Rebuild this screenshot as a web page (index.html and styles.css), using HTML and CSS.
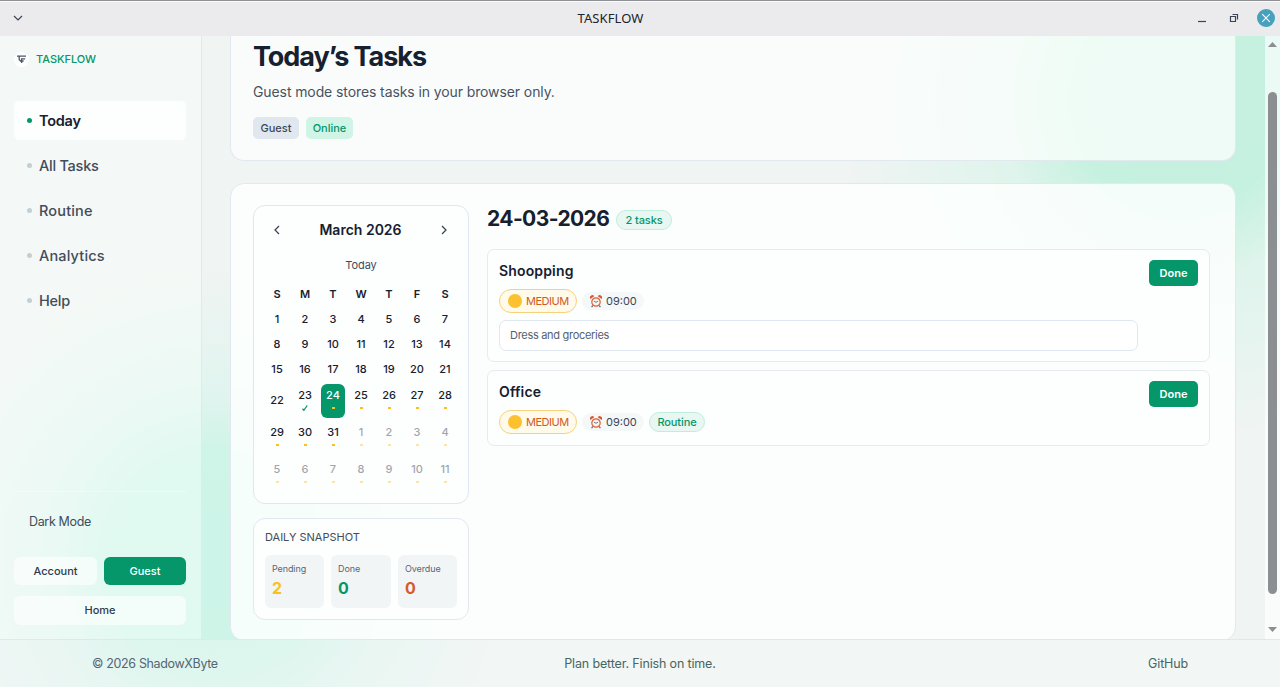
FILE: index.html
```html
<!DOCTYPE html>
<html lang="en">
<head>
    <meta charset="UTF-8">
    <meta name="viewport" content="width=device-width, initial-scale=1.0">
    <title>TASKFLOW</title>
    <link rel="stylesheet" href="styles.css">
</head>
<body>
    <header class="titlebar">
        <svg class="win-menu" width="12" height="8" viewBox="0 0 12 8"><path d="M2 2l4 4 4-4"/></svg>
        <span class="win-title">TASKFLOW</span>
        <div class="win-controls">
            <svg width="10" height="10" viewBox="0 0 10 10"><path d="M1 8.5h8"/></svg>
            <svg width="10" height="10" viewBox="0 0 10 10"><path d="M1.5 3.5h5v5h-5zM3.5 1.5h5v5"/></svg>
            <span class="win-close"><svg width="10" height="10" viewBox="0 0 10 10"><path d="M1.2 1.2l7.6 7.6M8.8 1.2L1.2 8.8"/></svg></span>
        </div>
    </header>

    <div class="app">
        <aside class="sidebar">
            <div class="brand">
                <svg class="logo" width="15" height="15" viewBox="0 0 15 15"><circle cx="7.5" cy="7.5" r="7.5" fill="#fff"/><path d="M3 4.2h9M5.2 4.5v3.3l2 1.6M7.6 11V6.8h3.6M7.6 9h2" fill="none" stroke="#4b5565" stroke-width="1.3"/></svg>
                <span>TASKFLOW</span>
            </div>
            <nav class="nav">
                <a class="nav-link active">Today</a>
                <a class="nav-link">All Tasks</a>
                <a class="nav-link routine-link">Routine</a>
                <a class="nav-link routine-link">Analytics</a>
                <a class="nav-link">Help</a>
            </nav>
            <div class="sidebar-bottom">
                <div class="dark-mode">Dark Mode</div>
                <div class="account-grid">
                    <button class="side-btn">Account</button>
                    <button class="side-btn primary">Guest</button>
                    <button class="side-btn wide">Home</button>
                </div>
            </div>
        </aside>

        <main class="main">
            <section class="hero">
                <h1>Today’s Tasks</h1>
                <p>Guest mode stores tasks in your browser only.</p>
                <div class="badges">
                    <span class="badge">Guest</span>
                    <span class="badge online">Online</span>
                </div>
            </section>

            <section class="workspace">
                <div class="left-col">
                    <div class="calendar">
                        <div class="cal-head">
                            <svg width="8" height="10" viewBox="0 0 8 10"><path d="M6 1L2 5l4 4"/></svg>
                            <strong>March 2026</strong>
                            <svg width="8" height="10" viewBox="0 0 8 10"><path d="M2 1l4 4-4 4"/></svg>
                        </div>
                        <div class="cal-today">Today</div>
                        <div class="cal-grid">
                            <b>S</b><b>M</b><b>T</b><b>W</b><b>T</b><b>F</b><b>S</b>
                            <span>1</span><span>2</span><span>3</span><span>4</span><span>5</span><span>6</span><span>7</span>
                            <span>8</span><span>9</span><span>10</span><span>11</span><span>12</span><span>13</span><span>14</span>
                            <span>15</span><span>16</span><span>17</span><span>18</span><span>19</span><span>20</span><span>21</span>
                            <span>22</span>
                            <span class="day">23<svg class="check" width="8" height="8" viewBox="0 0 8 8"><path d="M1.5 4.7l1.4 1.6L6.2 1.5"/></svg></span>
                            <span class="day selected">24<i></i></span>
                            <span class="day">25<i></i></span><span class="day">26<i></i></span><span class="day">27<i></i></span><span class="day">28<i></i></span>
                            <span class="day">29<i></i></span><span class="day">30<i></i></span><span class="day">31<i></i></span>
                            <span class="day other">1<i></i></span><span class="day other">2<i></i></span><span class="day other">3<i></i></span><span class="day other">4<i></i></span>
                            <span class="day other">5<i></i></span><span class="day other">6<i></i></span><span class="day other">7<i></i></span><span class="day other">8<i></i></span><span class="day other">9<i></i></span><span class="day other">10<i></i></span><span class="day other">11<i></i></span>
                        </div>
                    </div>

                    <div class="snapshot">
                        <div class="snapshot-title">DAILY SNAPSHOT</div>
                        <div class="stats">
                            <div class="stat pending"><span>Pending</span><strong>2</strong></div>
                            <div class="stat done"><span>Done</span><strong>0</strong></div>
                            <div class="stat overdue"><span>Overdue</span><strong>0</strong></div>
                        </div>
                    </div>
                </div>

                <div class="right-col">
                    <div class="date-head">
                        <h2>24-03-2026</h2>
                        <span class="tag">2 tasks</span>
                    </div>

                    <article class="task">
                        <div class="task-body">
                            <h3>Shoopping</h3>
                            <div class="meta">
                                <span class="priority"><i></i><span>MEDIUM</span></span>
                                <span class="time"><svg width="12" height="13" viewBox="0 0 12 13"><use href="#clock"/></svg><span>09:00</span></span>
                            </div>
                            <div class="note"><span>Dress and groceries</span></div>
                        </div>
                        <button class="done-btn">Done</button>
                    </article>

                    <article class="task">
                        <div class="task-body">
                            <h3>Office</h3>
                            <div class="meta">
                                <span class="priority"><i></i><span>MEDIUM</span></span>
                                <span class="time"><svg width="12" height="13" viewBox="0 0 12 13"><use href="#clock"/></svg><span>09:00</span></span>
                                <span class="tag routine">Routine</span>
                            </div>
                        </div>
                        <button class="done-btn">Done</button>
                    </article>
                </div>
            </section>
        </main>

        <div class="scrollbar">
            <svg width="9" height="5" viewBox="0 0 9 5"><path d="M0 5L4.5 0 9 5z"/></svg>
            <div class="thumb"></div>
            <svg width="9" height="5" viewBox="0 0 9 5"><path d="M0 0h9L4.5 5z"/></svg>
        </div>
    </div>

    <footer class="footer">
        <span class="copyright">© 2026 ShadowXByte</span>
        <span class="slogan">Plan better. Finish on time.</span>
        <span class="github">GitHub</span>
    </footer>

    <svg class="defs" width="0" height="0">
        <symbol id="clock" viewBox="0 0 12 13">
            <path d="M.3 4A2.4 2.4 0 0 1 4.2 1.2zM11.7 4A2.4 2.4 0 0 0 7.8 1.2z" fill="#d9582f"/>
            <path d="M2.8 10.5l-1.2 1.7M9.2 10.5l1.2 1.7" stroke="#55606c" stroke-width="1.2"/>
            <circle cx="6" cy="7" r="4.2" fill="#f4f3ee" stroke="#dd6036" stroke-width="1.2"/>
            <path d="M4 6.2l2 1.1 2-1.1" fill="none" stroke="#55606c" stroke-width=".8"/>
        </symbol>
    </svg>
</body>
</html>
```

FILE: styles.css
```css
* {
    box-sizing: border-box;
}
body {
    margin: 0;
    height: 687px;
    overflow: hidden;
    display: flex;
    flex-direction: column;
    font-family: Inter, "Open Sans", sans-serif;
    color: #16202f;
    background:
        radial-gradient(circle at 1180px 100px, #c4f0de 0, #c6f1e0 110px, rgba(208, 244, 230, 0.55) 180px, rgba(225, 246, 239, 0) 340px),
        radial-gradient(circle at 215px 560px, #cdf4e8 0, #cff4e8 110px, rgba(214, 245, 236, 0.6) 165px, rgba(230, 248, 243, 0) 290px),
        #f0f4f3;
}
h1, h2, h3, p {
    margin: 0;
}
button {
    font-family: inherit;
    border: none;
    padding: 0;
}

/* window bar */
.titlebar {
    height: 36px;
    flex: none;
    display: grid;
    grid-template-columns: 1fr auto 1fr;
    align-items: center;
    padding: 0 5px 2px 12px;
    background: #ebebed;
    border-top: 1px solid #8f9194;
    box-shadow: inset 0 1px #fafafa;
}
.titlebar svg {
    fill: none;
    stroke: #3a4456;
    stroke-width: 1.2;
}
.win-title {
    font: 13px "Noto Sans", sans-serif;
    letter-spacing: 0.1px;
    color: #20242b;
    margin-right: 66px;
}
.win-controls {
    display: flex;
    justify-content: flex-end;
    align-items: center;
    gap: 22px;
}
.win-close {
    width: 18px;
    height: 18px;
    margin-left: -4px;
    border-radius: 50%;
    background: #45a1bd;
    display: flex;
    align-items: center;
    justify-content: center;
}
.titlebar .win-close svg {
    stroke: #fff;
    stroke-width: 1.1;
}

.app {
    height: 603px;
    flex: none;
    display: flex;
    overflow: hidden;
}

/* sidebar */
.sidebar {
    width: 202px;
    flex: none;
    padding: 15px 15px 14px 14px;
    display: flex;
    flex-direction: column;
    background: rgba(250, 254, 252, 0.42);
    border-right: 1px solid #e1e9ef;
}
.brand {
    display: flex;
    align-items: center;
    gap: 7px;
    height: 16px;
    font-size: 11px;
    font-weight: 500;
    letter-spacing: -0.05px;
    color: #059669;
}
.nav {
    display: flex;
    flex-direction: column;
    gap: 6px;
    margin-top: 34px;
}
.nav-link {
    height: 39px;
    padding-left: 13px;
    display: flex;
    align-items: center;
    gap: 7px;
    border-radius: 5px;
    font-size: 14.5px;
    font-weight: 500;
    letter-spacing: -0.25px;
    color: #414c5c;
}
.nav-link.routine-link {
    letter-spacing: 0.15px;
}
.nav-link::before {
    content: "";
    width: 5px;
    height: 5px;
    border-radius: 50%;
    background: #c3cfd3;
}
.nav-link.active {
    background: #fdfffe;
    color: #16202f;
    font-weight: 600;
}
.nav-link.active::before {
    background: #059669;
}
.sidebar-bottom {
    margin-top: auto;
    border-top: 1px solid rgba(255, 255, 255, 0.35);
    height: 134px;
}
.dark-mode {
    padding: 21px 0 0 15px;
    height: 65px;
    font-size: 12.5px;
    line-height: 17px;
    letter-spacing: -0.35px;
    color: #414c5c;
}
.account-grid {
    display: grid;
    grid-template-columns: 83px 82px;
    grid-template-rows: 28px 29px;
    gap: 11px 7px;
}
.side-btn {
    border-radius: 6px;
    background: rgba(255, 255, 255, 0.6);
    color: #2f3b4c;
    font-size: 11px;
    font-weight: 500;
}
.side-btn.primary {
    background: #059669;
    color: #fff;
}
.side-btn.wide {
    grid-column: span 2;
    padding-bottom: 2px;
}

/* content */
.main {
    flex: 1;
    padding-left: 28px;
    padding-right: 29px;
}
.hero {
    height: 125px;
    padding: 4px 22px 0;
    border: 1px solid #e1e9ef;
    border-top: none;
    border-radius: 0 0 14px 14px;
    background: rgba(253, 255, 254, 0.74);
}
.hero h1 {
    font-size: 27px;
    font-weight: 700;
    line-height: 34px;
    letter-spacing: -1.05px;
}
.hero p {
    margin-top: 9px;
    font-size: 14px;
    line-height: 18px;
    letter-spacing: -0.1px;
    color: #475364;
}
.badges {
    display: flex;
    gap: 7px;
    margin-top: 16px;
}
.badge {
    width: 46px;
    height: 22px;
    border-radius: 5px;
    background: #e1e7ef;
    color: #3c4758;
    font-size: 11px;
    font-weight: 500;
    line-height: 22px;
    text-align: center;
}
.badge.online {
    width: 47px;
    background: #d0f4e6;
    color: #059669;
}
.workspace {
    height: 458px;
    margin-top: 22px;
    padding: 21px 25px 0 22px;
    display: flex;
    gap: 18px;
    border: 1px solid #e1e9ef;
    border-radius: 14px;
    background: rgba(254, 255, 255, 0.84);
}
.left-col {
    width: 216px;
    flex: none;
}

/* calendar */
.calendar {
    height: 299px;
    padding: 12px 11px 0;
    border: 1px solid #dfe7f0;
    border-radius: 12px;
    background: #fdfefe;
}
.cal-head {
    height: 24px;
    padding: 0 9px 0 8px;
    display: flex;
    align-items: center;
    justify-content: space-between;
    font-size: 14px;
}
.cal-head strong {
    font-weight: 600;
    margin-bottom: 1px;
}
.cal-head svg {
    fill: none;
    stroke: #334052;
    stroke-width: 1.2;
}
.cal-today {
    margin-top: 15px;
    height: 16px;
    text-align: center;
    font-size: 11px;
    line-height: 16px;
    letter-spacing: -0.1px;
    color: #414c5c;
}
.cal-grid {
    margin-top: 11px;
    display: grid;
    grid-template-columns: repeat(7, 24px);
    grid-template-rows: repeat(4, 21px) repeat(3, 33px);
    gap: 4px;
    font-size: 11px;
    font-weight: 500;
}
.cal-grid > * {
    display: flex;
    align-items: center;
    justify-content: center;
    padding-bottom: 2px;
}
.cal-grid b {
    font-weight: 600;
}
.cal-grid .day {
    flex-direction: column;
    justify-content: flex-start;
    padding-top: 4px;
    line-height: 15px;
    border-radius: 6px;
}
.day i {
    width: 3px;
    height: 2px;
    margin-top: 4px;
    background: #fbbf24;
}
.day .check {
    margin-top: 1px;
    fill: none;
    stroke: #059669;
    stroke-width: 1.3;
}
.day.selected {
    height: 34px;
    background: #059669;
    color: #fff;
}
.day.other {
    opacity: 0.4;
}

/* snapshot */
.snapshot {
    height: 102px;
    margin-top: 14px;
    padding: 11px;
    border: 1px solid #e1e9ef;
    border-radius: 12px;
    background: #fdfefe;
}
.snapshot-title {
    height: 15px;
    font-size: 11px;
    line-height: 15px;
    color: #414c5c;
}
.stats {
    margin-top: 10px;
    display: grid;
    grid-template-columns: 59px 60px 59px;
    gap: 7px;
}
.stat {
    height: 53px;
    padding: 7px 7px 0;
    border-radius: 6px;
    background: #f2f5f6;
}
.stat span {
    display: block;
    font-size: 9px;
    line-height: 14px;
    letter-spacing: -0.1px;
    color: #5b6675;
}
.stat strong {
    display: block;
    margin-top: 2px;
    font-size: 16px;
    line-height: 20px;
    font-weight: 700;
}
.pending strong {
    color: #fbbf24;
}
.done strong {
    color: #059669;
}
.overdue strong {
    color: #d8592b;
}

/* task list */
.right-col {
    flex: 1;
}
.date-head {
    height: 28px;
    display: flex;
    align-items: center;
    gap: 7px;
}
.date-head h2 {
    width: 122px;
    font-size: 21px;
    font-weight: 700;
    line-height: 28px;
    letter-spacing: -0.6px;
    white-space: nowrap;
}
.tag {
    width: 56px;
    height: 20px;
    border: 1px solid #bfeedd;
    border-radius: 10px;
    background: #e8f7f2;
    color: #059669;
    font-size: 11px;
    font-weight: 500;
    line-height: 18px;
    letter-spacing: -0.1px;
    text-align: center;
}
.date-head .tag {
    margin-top: 2px;
}
.task {
    margin-top: 8px;
    min-height: 76px;
    padding: 10px 11px;
    display: flex;
    align-items: flex-start;
    gap: 11px;
    border: 1px solid #e5ebef;
    border-radius: 7px;
    background: #fdfefe;
}
.date-head + .task {
    margin-top: 16px;
}
.task-body {
    flex: 1;
}
.task h3 {
    font-size: 14px;
    font-weight: 600;
    line-height: 22px;
    letter-spacing: 0.15px;
}
.meta {
    height: 24px;
    margin-top: 7px;
    display: flex;
    align-items: center;
    gap: 5px;
}
.priority {
    width: 78px;
    height: 24px;
    padding: 0 8px;
    display: flex;
    align-items: center;
    gap: 4px;
    border: 1px solid #f6d27c;
    border-radius: 12px;
    background: #fffaea;
    color: #d05a24;
    font-size: 11px;
    letter-spacing: -0.5px;
}
.priority i {
    width: 14px;
    height: 14px;
    flex: none;
    border-radius: 50%;
    background: #fdc02f;
}
.time {
    width: 62px;
    height: 18px;
    padding-left: 8px;
    display: flex;
    align-items: center;
    gap: 4px;
    border-radius: 9px;
    background: #f5f8f8;
    color: #3a4557;
    font-size: 11px;
}
.note {
    height: 31px;
    margin-top: 7px;
    padding-left: 10px;
    border: 1px solid #dfe7f0;
    border-radius: 7px;
    background: #fff;
    color: #556171;
    font-size: 11px;
    line-height: 29px;
    letter-spacing: -0.3px;
}
.done-btn {
    width: 49px;
    height: 26px;
    border-radius: 5px;
    background: #059669;
    color: #fff;
    font-size: 11px;
    font-weight: 600;
}

/* scrollbar */
.scrollbar {
    width: 15px;
    flex: none;
    padding: 6px 0 7px;
    display: flex;
    flex-direction: column;
    align-items: center;
    background: rgba(255, 255, 255, 0.65);
}
.scrollbar svg {
    fill: #8b8f92;
}
.thumb {
    width: 9px;
    height: 502px;
    margin: 45px 0 auto;
    border-radius: 5px;
    background: #8b8f92;
}

.footer {
    height: 48px;
    flex: none;
    padding: 0 92px;
    display: grid;
    grid-template-columns: 1fr auto 1fr;
    align-items: center;
    border-top: 1px solid #dfe8ec;
    background: rgba(247, 250, 250, 0.35);
    font-size: 12.5px;
    letter-spacing: -0.15px;
    color: #566475;
}
.copyright {
    letter-spacing: -0.35px;
}
.slogan, .github {
    color: #47665f;
}
.github {
    text-align: right;
}
.defs {
    position: absolute;
}
```
